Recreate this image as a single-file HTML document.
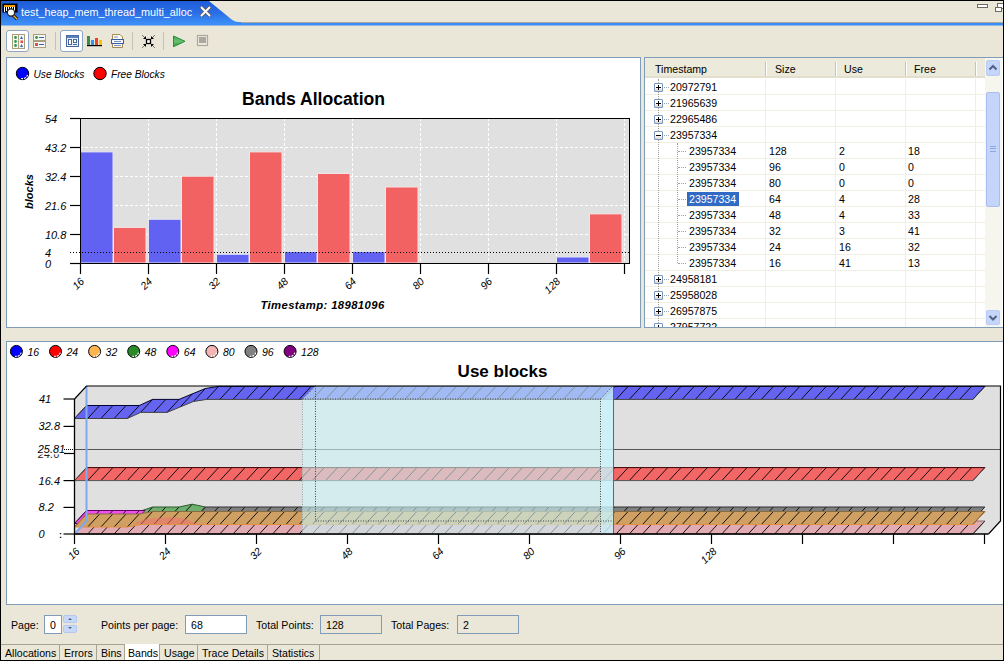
<!DOCTYPE html>
<html><head><meta charset="utf-8">
<style>
*{box-sizing:border-box}
html,body{margin:0;padding:0}
body{width:1004px;height:661px;overflow:hidden;position:relative;background:#EBE7D8;font-family:"Liberation Sans",sans-serif;font-size:10.6px;color:#000}
.a{position:absolute}
.pnl{position:absolute;background:#fff;border:1px solid #7F9DB9}
.btn{position:absolute;border:1px solid #8FA6C4;border-radius:3px;background:#fff}
.sep{position:absolute;width:1px;background:#C5C2B2}
.t{position:absolute;white-space:nowrap;line-height:1}
.box{position:absolute;border:1px solid #7F9DB9;background:#fff}
.tab{position:absolute;top:645px;height:15px;border-right:1px solid #A7A391;white-space:nowrap;padding-left:4px;line-height:17px;font-size:10.6px}
</style></head>
<body>
<!-- frame -->
<div class="a" style="left:0;top:0;width:1004px;height:1px;background:#000"></div>
<div class="a" style="left:0;top:0;width:1px;height:661px;background:#000"></div>
<div class="a" style="left:1003px;top:0;width:1px;height:661px;background:#000"></div>
<div class="a" style="left:0;top:660px;width:1004px;height:1px;background:#000"></div>

<!-- tab header -->
<svg class="a" style="left:1px;top:1px" width="1002" height="25">
  <defs><linearGradient id="tg" x1="0" y1="0" x2="0" y2="1">
    <stop offset="0" stop-color="#1F5CD8"/><stop offset="0.55" stop-color="#2A6EE6"/><stop offset="1" stop-color="#3C8EF6"/></linearGradient></defs>
  <rect x="0" y="21" width="1002" height="1" fill="#A8A89C"/>
  <path d="M0 0 H208 L230 18 C234 21 236 21 240 21 V22 H0 Z" fill="url(#tg)"/>
  <rect x="0" y="22" width="1002" height="2.5" fill="#3C8EF6"/>
</svg>
<div class="t" style="left:21px;top:7px;color:#fff;font-size:10.8px">test_heap_mem_thread_multi_alloc</div>

<!-- toolbar -->
<div class="btn" style="left:6px;top:30px;width:23px;height:22px"></div>
<div class="sep" style="left:55px;top:32px;height:18px"></div>
<div class="btn" style="left:60px;top:30px;width:23px;height:22px"></div>
<div class="sep" style="left:132px;top:32px;height:18px"></div>
<div class="sep" style="left:163px;top:32px;height:18px"></div>


<!-- tab icon + close -->
<svg class="a" style="left:1px;top:1px" width="240" height="22">
  <rect x="1.5" y="2.5" width="15" height="9" fill="#000"/>
  <g fill="#fff"><rect x="3" y="4" width="1" height="7"/><rect x="5" y="4" width="1" height="6"/><rect x="7" y="4" width="1" height="7"/><rect x="9" y="4" width="1" height="5"/><rect x="11" y="4" width="1" height="6"/><rect x="13" y="4" width="1" height="7"/></g>
  <g fill="#F5A000"><rect x="3" y="4" width="11" height="2"/></g>
  <line x1="11" y1="13" x2="16" y2="18" stroke="#000" stroke-width="3"/>
  <line x1="11" y1="13" x2="16" y2="18" stroke="#F0B030" stroke-width="1.5"/>
  <circle cx="10" cy="11.5" r="3.6" fill="#fff" stroke="#222" stroke-width="1.2"/>
  <path d="M200 6 L209 15 M209 6 L200 15" stroke="#6b5a50" stroke-width="3.2"/>
  <path d="M200 6 L209 15 M209 6 L200 15" stroke="#fff" stroke-width="1.8"/>
</svg>
<!-- min/max -->
<svg class="a" style="left:970px;top:1px" width="33" height="14">
  <rect x="7.5" y="3.5" width="10" height="3" fill="#fff" stroke="#6E6A5E"/>
  <rect x="27.5" y="2.5" width="6" height="5" fill="#fff" stroke="#6E6A5E"/>
  <rect x="25.5" y="6.5" width="6" height="4" fill="#fff" stroke="#6E6A5E"/>
</svg>
<!-- toolbar icons -->
<svg class="a" style="left:0;top:25px" width="220" height="32">
  <!-- icon1 -->
  <rect x="12.5" y="9.5" width="12" height="14" fill="#F4F6F8" stroke="#A89F7E"/>
  <line x1="18.5" y1="10" x2="18.5" y2="23" stroke="#A89F7E"/>
  <g fill="#2F9A3C"><circle cx="15.5" cy="12.5" r="1.4"/><circle cx="15.5" cy="16.5" r="1.4"/><circle cx="15.5" cy="20.5" r="1.4"/></g>
  <g fill="#3A62B8"><path d="M21.5 11 L23 14 H20Z"/><path d="M21.5 19 L23 22 H20Z"/></g>
  <rect x="20.5" y="15.5" width="2.5" height="2.5" fill="#E05040"/>
  <!-- icon2 -->
  <rect x="33.5" y="9.5" width="12" height="6" fill="#F4F6F8" stroke="#A89F7E"/>
  <rect x="33.5" y="16.5" width="12" height="6" fill="#F4F6F8" stroke="#A89F7E"/>
  <circle cx="36.5" cy="12.5" r="1.4" fill="#2F9A3C"/><rect x="35" y="18" width="3" height="3" fill="#E05040"/>
  <line x1="39" y1="12.5" x2="44" y2="12.5" stroke="#4060A0"/><line x1="39" y1="19.5" x2="44" y2="19.5" stroke="#4060A0"/>
  <!-- icon3 -->
  <rect x="66.5" y="10.5" width="12" height="11" fill="#E8F0F8" stroke="#4A68A0"/>
  <rect x="67" y="11" width="11" height="2" fill="#5A80C0"/>
  <rect x="68.5" y="14.5" width="3" height="5" fill="#fff" stroke="#4A68A0"/>
  <rect x="73.5" y="14.5" width="3" height="3" fill="#fff" stroke="#4A68A0"/>
  <line x1="73" y1="19.5" x2="77" y2="19.5" stroke="#4A68A0"/>
  <!-- icon4 chart -->
  <rect x="87" y="11" width="3" height="9" fill="#3A8A50"/>
  <rect x="91" y="15" width="3" height="5" fill="#2A98F0"/>
  <rect x="95" y="13" width="3" height="7" fill="#F04020"/>
  <rect x="99" y="15" width="3" height="5" fill="#F8C000"/>
  <rect x="87" y="20" width="15" height="1.2" fill="#000"/>
  <!-- icon5 doc -->
  <path d="M112.5 9.5 H120 L122.5 12 V22.5 H112.5Z" fill="#FCFCF4" stroke="#A08A50"/>
  <rect x="111.5" y="14.5" width="12" height="4" fill="#F4F8FF" stroke="#3A5AA0"/>
  <g stroke="#6070B0" stroke-width="0.8"><line x1="114" y1="12" x2="118" y2="12"/><line x1="114" y1="16.5" x2="121" y2="16.5"/><line x1="114" y1="20.5" x2="121" y2="20.5"/></g>
  <!-- icon6 collapse -->
  <rect x="146.5" y="14.5" width="4" height="4" fill="#fff" stroke="#000" stroke-width="1.3"/>
  <g fill="#000"><path d="M146 11 V14 H143Z"/><path d="M151 11 V14 H154Z"/><path d="M146 22 V19 H143Z"/><path d="M151 22 V19 H154Z"/></g>
  <g stroke="#000" stroke-width="1" stroke-dasharray="1,0.6"><line x1="142.5" y1="10.5" x2="145" y2="13"/><line x1="154.5" y1="10.5" x2="152" y2="13"/><line x1="142.5" y1="22.5" x2="145" y2="20"/><line x1="154.5" y1="22.5" x2="152" y2="20"/></g>
  <!-- play -->
  <defs><linearGradient id="pg" x1="0" y1="0" x2="0" y2="1"><stop offset="0" stop-color="#3AA84A"/><stop offset="0.5" stop-color="#6CC070"/><stop offset="1" stop-color="#2E9A40"/></linearGradient></defs>
  <path d="M173.5 11 L185 16.3 L173.5 21.7Z" fill="url(#pg)" stroke="#249038" stroke-width="1"/>
  <!-- stop -->
  <rect x="197.5" y="10.5" width="10" height="10" fill="#EDEBE0" stroke="#ABA69E" stroke-width="1.2"/>
  <rect x="199" y="12" width="7" height="6" fill="#ABA69E"/>
</svg>

<!-- panels -->
<div class="pnl" style="left:6px;top:57px;width:635px;height:271px"></div>
<div class="pnl" style="left:644px;top:57px;width:359px;height:271px;border-right:none"></div>
<div class="pnl" style="left:6px;top:341px;width:997px;height:264px;border-right:none"></div>

<!-- chart1 -->
<svg class="a" style="left:0;top:0" width="1004" height="661" font-family="Liberation Sans">
<circle cx="22.5" cy="73.5" r="6.2" fill="#0000FF" stroke="#000" stroke-width="1"/>
<text x="33.5" y="78" font-style="italic" font-size="10.2">Use Blocks</text>
<path d="M27.5 74.8 A5.2 5.2 0 0 1 21.2 78.5" stroke="#fff" stroke-width="1.1" fill="none" stroke-dasharray="2,1"/>
<path d="M105.0 74.8 A5.2 5.2 0 0 1 98.7 78.5" stroke="#fff" stroke-width="1.1" fill="none" stroke-dasharray="2,1"/>
<circle cx="100" cy="73.5" r="6.2" fill="#FF0000" stroke="#000" stroke-width="1"/>
<text x="111" y="78" font-style="italic" font-size="10.2">Free Blocks</text>
<text x="313.5" y="105" font-weight="bold" font-size="17.6" text-anchor="middle">Bands Allocation</text>
<rect x="80" y="118" width="549" height="145" fill="#E0E0E0"/>
<line x1="80" y1="147.5" x2="629" y2="147.5" stroke="#fff" stroke-width="1" stroke-dasharray="3,2"/>
<line x1="80" y1="176.5" x2="629" y2="176.5" stroke="#fff" stroke-width="1" stroke-dasharray="3,2"/>
<line x1="80" y1="205.5" x2="629" y2="205.5" stroke="#fff" stroke-width="1" stroke-dasharray="3,2"/>
<line x1="80" y1="234.5" x2="629" y2="234.5" stroke="#fff" stroke-width="1" stroke-dasharray="3,2"/>
<line x1="148.5" y1="118" x2="148.5" y2="263" stroke="#fff" stroke-width="1" stroke-dasharray="3,2"/>
<line x1="216.5" y1="118" x2="216.5" y2="263" stroke="#fff" stroke-width="1" stroke-dasharray="3,2"/>
<line x1="284.5" y1="118" x2="284.5" y2="263" stroke="#fff" stroke-width="1" stroke-dasharray="3,2"/>
<line x1="352.5" y1="118" x2="352.5" y2="263" stroke="#fff" stroke-width="1" stroke-dasharray="3,2"/>
<line x1="420.5" y1="118" x2="420.5" y2="263" stroke="#fff" stroke-width="1" stroke-dasharray="3,2"/>
<line x1="488.5" y1="118" x2="488.5" y2="263" stroke="#fff" stroke-width="1" stroke-dasharray="3,2"/>
<line x1="556.5" y1="118" x2="556.5" y2="263" stroke="#fff" stroke-width="1" stroke-dasharray="3,2"/>
<line x1="624.5" y1="118" x2="624.5" y2="263" stroke="#fff" stroke-width="1" stroke-dasharray="3,2"/>
<rect x="80.5" y="151.9" width="32.5" height="111.1" fill="#6262F2" stroke="#E4E4F4" stroke-width="1"/>
<rect x="113.5" y="227.4" width="32.5" height="35.6" fill="#F26262" stroke="#F4E4E4" stroke-width="1"/>
<rect x="148.5" y="219.3" width="32.5" height="43.7" fill="#6262F2" stroke="#E4E4F4" stroke-width="1"/>
<rect x="181.5" y="176.2" width="32.5" height="86.8" fill="#F26262" stroke="#F4E4E4" stroke-width="1"/>
<rect x="216.5" y="254.3" width="32.5" height="8.7" fill="#6262F2" stroke="#E4E4F4" stroke-width="1"/>
<rect x="249.5" y="151.9" width="32.5" height="111.1" fill="#F26262" stroke="#F4E4E4" stroke-width="1"/>
<rect x="284.5" y="251.6" width="32.5" height="11.4" fill="#6262F2" stroke="#E4E4F4" stroke-width="1"/>
<rect x="317.5" y="173.5" width="32.5" height="89.5" fill="#F26262" stroke="#F4E4E4" stroke-width="1"/>
<rect x="352.5" y="251.6" width="32.5" height="11.4" fill="#6262F2" stroke="#E4E4F4" stroke-width="1"/>
<rect x="385.5" y="187.0" width="32.5" height="76.0" fill="#F26262" stroke="#F4E4E4" stroke-width="1"/>
<rect x="556.5" y="257.0" width="32.5" height="6.0" fill="#6262F2" stroke="#E4E4F4" stroke-width="1"/>
<rect x="589.5" y="213.9" width="32.5" height="49.1" fill="#F26262" stroke="#F4E4E4" stroke-width="1"/>
<line x1="70" y1="252.5" x2="629" y2="252.5" stroke="#000" stroke-width="1" stroke-dasharray="1,2"/>
<rect x="80.5" y="118.5" width="549" height="145" fill="none" stroke="#000" stroke-width="1"/>
<line x1="70" y1="118.5" x2="80" y2="118.5" stroke="#000" stroke-width="1.2"/>
<text x="45" y="122.5" font-style="italic" font-size="11">54</text>
<line x1="70" y1="147.5" x2="80" y2="147.5" stroke="#000" stroke-width="1.2"/>
<text x="45" y="151.5" font-style="italic" font-size="11">43.2</text>
<line x1="70" y1="176.5" x2="80" y2="176.5" stroke="#000" stroke-width="1.2"/>
<text x="45" y="180.5" font-style="italic" font-size="11">32.4</text>
<line x1="70" y1="205.5" x2="80" y2="205.5" stroke="#000" stroke-width="1.2"/>
<text x="45" y="209.5" font-style="italic" font-size="11">21.6</text>
<line x1="70" y1="234.5" x2="80" y2="234.5" stroke="#000" stroke-width="1.2"/>
<text x="45" y="238.5" font-style="italic" font-size="11">10.8</text>
<line x1="70" y1="263.5" x2="80" y2="263.5" stroke="#000" stroke-width="1.2"/>
<text x="45" y="267.5" font-style="italic" font-size="11">0</text>
<text x="45" y="256.5" font-style="italic" font-size="11">4</text>
<line x1="80.5" y1="263" x2="80.5" y2="274" stroke="#000" stroke-width="1.2"/>
<text transform="translate(85,282) rotate(-45)" text-anchor="end" font-style="italic" font-size="10.5">16</text>
<line x1="148.5" y1="263" x2="148.5" y2="274" stroke="#000" stroke-width="1.2"/>
<text transform="translate(153,282) rotate(-45)" text-anchor="end" font-style="italic" font-size="10.5">24</text>
<line x1="216.5" y1="263" x2="216.5" y2="274" stroke="#000" stroke-width="1.2"/>
<text transform="translate(221,282) rotate(-45)" text-anchor="end" font-style="italic" font-size="10.5">32</text>
<line x1="284.5" y1="263" x2="284.5" y2="274" stroke="#000" stroke-width="1.2"/>
<text transform="translate(289,282) rotate(-45)" text-anchor="end" font-style="italic" font-size="10.5">48</text>
<line x1="352.5" y1="263" x2="352.5" y2="274" stroke="#000" stroke-width="1.2"/>
<text transform="translate(357,282) rotate(-45)" text-anchor="end" font-style="italic" font-size="10.5">64</text>
<line x1="420.5" y1="263" x2="420.5" y2="274" stroke="#000" stroke-width="1.2"/>
<text transform="translate(425,282) rotate(-45)" text-anchor="end" font-style="italic" font-size="10.5">80</text>
<line x1="488.5" y1="263" x2="488.5" y2="274" stroke="#000" stroke-width="1.2"/>
<text transform="translate(493,282) rotate(-45)" text-anchor="end" font-style="italic" font-size="10.5">96</text>
<line x1="556.5" y1="263" x2="556.5" y2="274" stroke="#000" stroke-width="1.2"/>
<text transform="translate(561,282) rotate(-45)" text-anchor="end" font-style="italic" font-size="10.5">128</text>
<line x1="624.5" y1="263" x2="624.5" y2="274" stroke="#000" stroke-width="1.2"/>
<text x="322.5" y="308.5" font-weight="bold" font-style="italic" font-size="11.3" letter-spacing="0.4" text-anchor="middle">Timestamp: 18981096</text>
<text transform="translate(33,191.5) rotate(-90)" font-weight="bold" font-style="italic" font-size="11" text-anchor="middle">blocks</text>
</svg>
<!-- table -->
<div class="a" style="left:645px;top:58px;width:357px;height:269px;overflow:hidden">
<div class="a" style="left:0;top:0;width:340px;height:20px;background:#EBEADB;border-bottom:1px solid #D6D2C2"></div>
<div class="a" style="left:0;top:18px;width:340px;height:2px;background:#E2DFCF"></div>
<div class="a" style="left:120px;top:4px;width:1px;height:14px;background:#C7C5B2"></div>
<div class="a" style="left:121px;top:4px;width:1px;height:14px;background:#fff"></div>
<div class="a" style="left:190px;top:4px;width:1px;height:14px;background:#C7C5B2"></div>
<div class="a" style="left:191px;top:4px;width:1px;height:14px;background:#fff"></div>
<div class="a" style="left:260px;top:4px;width:1px;height:14px;background:#C7C5B2"></div>
<div class="a" style="left:261px;top:4px;width:1px;height:14px;background:#fff"></div>
<div class="a" style="left:330px;top:4px;width:1px;height:14px;background:#C7C5B2"></div>
<div class="a" style="left:331px;top:4px;width:1px;height:14px;background:#fff"></div>
<div class="t" style="left:10px;top:6px">Timestamp</div>
<div class="t" style="left:130px;top:6px">Size</div>
<div class="t" style="left:199px;top:6px">Use</div>
<div class="t" style="left:269px;top:6px">Free</div>
<div class="a" style="left:0;top:36px;width:340px;height:1px;background:#F1EFE2"></div>
<div class="a" style="left:0;top:52px;width:340px;height:1px;background:#F1EFE2"></div>
<div class="a" style="left:0;top:68px;width:340px;height:1px;background:#F1EFE2"></div>
<div class="a" style="left:0;top:84px;width:340px;height:1px;background:#F1EFE2"></div>
<div class="a" style="left:0;top:100px;width:340px;height:1px;background:#F1EFE2"></div>
<div class="a" style="left:0;top:116px;width:340px;height:1px;background:#F1EFE2"></div>
<div class="a" style="left:0;top:132px;width:340px;height:1px;background:#F1EFE2"></div>
<div class="a" style="left:0;top:148px;width:340px;height:1px;background:#F1EFE2"></div>
<div class="a" style="left:0;top:164px;width:340px;height:1px;background:#F1EFE2"></div>
<div class="a" style="left:0;top:180px;width:340px;height:1px;background:#F1EFE2"></div>
<div class="a" style="left:0;top:196px;width:340px;height:1px;background:#F1EFE2"></div>
<div class="a" style="left:0;top:212px;width:340px;height:1px;background:#F1EFE2"></div>
<div class="a" style="left:0;top:228px;width:340px;height:1px;background:#F1EFE2"></div>
<div class="a" style="left:0;top:244px;width:340px;height:1px;background:#F1EFE2"></div>
<div class="a" style="left:0;top:260px;width:340px;height:1px;background:#F1EFE2"></div>
<div class="a" style="left:0;top:276px;width:340px;height:1px;background:#F1EFE2"></div>
<div class="a" style="left:120px;top:21px;width:1px;height:250px;background:#F1EFE2"></div>
<div class="a" style="left:190px;top:21px;width:1px;height:250px;background:#F1EFE2"></div>
<div class="a" style="left:260px;top:21px;width:1px;height:250px;background:#F1EFE2"></div>
<div class="a" style="left:330px;top:21px;width:1px;height:250px;background:#F1EFE2"></div>
<div class="a" style="left:13px;top:21px;width:0;height:250px;border-left:1px dotted #A0A0A0"></div>
<div class="a" style="left:32px;top:85px;width:0;height:120px;border-left:1px dotted #A0A0A0"></div>
<div class="a" style="left:19px;top:29px;width:5px;height:0;border-top:1px dotted #A0A0A0"></div>
<div class="a" style="left:9px;top:25px;width:9px;height:9px;border:1px solid #7A95C0;border-radius:1px;background:linear-gradient(#fff,#fff 50%,#D8D4C8)"></div>
<div class="a" style="left:11px;top:29px;width:5px;height:1px;background:#000"></div>
<div class="a" style="left:13px;top:27px;width:1px;height:5px;background:#000"></div>
<div class="t" style="left:25px;top:24px">20972791</div>
<div class="a" style="left:19px;top:45px;width:5px;height:0;border-top:1px dotted #A0A0A0"></div>
<div class="a" style="left:9px;top:41px;width:9px;height:9px;border:1px solid #7A95C0;border-radius:1px;background:linear-gradient(#fff,#fff 50%,#D8D4C8)"></div>
<div class="a" style="left:11px;top:45px;width:5px;height:1px;background:#000"></div>
<div class="a" style="left:13px;top:43px;width:1px;height:5px;background:#000"></div>
<div class="t" style="left:25px;top:40px">21965639</div>
<div class="a" style="left:19px;top:61px;width:5px;height:0;border-top:1px dotted #A0A0A0"></div>
<div class="a" style="left:9px;top:57px;width:9px;height:9px;border:1px solid #7A95C0;border-radius:1px;background:linear-gradient(#fff,#fff 50%,#D8D4C8)"></div>
<div class="a" style="left:11px;top:61px;width:5px;height:1px;background:#000"></div>
<div class="a" style="left:13px;top:59px;width:1px;height:5px;background:#000"></div>
<div class="t" style="left:25px;top:56px">22965486</div>
<div class="a" style="left:19px;top:77px;width:5px;height:0;border-top:1px dotted #A0A0A0"></div>
<div class="a" style="left:9px;top:73px;width:9px;height:9px;border:1px solid #7A95C0;border-radius:1px;background:linear-gradient(#fff,#fff 50%,#D8D4C8)"></div>
<div class="a" style="left:11px;top:77px;width:5px;height:1px;background:#000"></div>
<div class="t" style="left:25px;top:72px">23957334</div>
<div class="a" style="left:33px;top:93px;width:8px;height:0;border-top:1px dotted #A0A0A0"></div>
<div class="t" style="left:44px;top:88px">23957334</div>
<div class="t" style="left:124px;top:88px">128</div>
<div class="t" style="left:194px;top:88px">2</div>
<div class="t" style="left:263px;top:88px">18</div>
<div class="a" style="left:33px;top:109px;width:8px;height:0;border-top:1px dotted #A0A0A0"></div>
<div class="t" style="left:44px;top:104px">23957334</div>
<div class="t" style="left:124px;top:104px">96</div>
<div class="t" style="left:194px;top:104px">0</div>
<div class="t" style="left:263px;top:104px">0</div>
<div class="a" style="left:33px;top:125px;width:8px;height:0;border-top:1px dotted #A0A0A0"></div>
<div class="t" style="left:44px;top:120px">23957334</div>
<div class="t" style="left:124px;top:120px">80</div>
<div class="t" style="left:194px;top:120px">0</div>
<div class="t" style="left:263px;top:120px">0</div>
<div class="a" style="left:33px;top:141px;width:8px;height:0;border-top:1px dotted #A0A0A0"></div>
<div class="a" style="left:42px;top:134px;width:52px;height:14px;background:#316AC5"></div>
<div class="t" style="left:44px;top:136px;color:#fff">23957334</div>
<div class="t" style="left:124px;top:136px">64</div>
<div class="t" style="left:194px;top:136px">4</div>
<div class="t" style="left:263px;top:136px">28</div>
<div class="a" style="left:33px;top:157px;width:8px;height:0;border-top:1px dotted #A0A0A0"></div>
<div class="t" style="left:44px;top:152px">23957334</div>
<div class="t" style="left:124px;top:152px">48</div>
<div class="t" style="left:194px;top:152px">4</div>
<div class="t" style="left:263px;top:152px">33</div>
<div class="a" style="left:33px;top:173px;width:8px;height:0;border-top:1px dotted #A0A0A0"></div>
<div class="t" style="left:44px;top:168px">23957334</div>
<div class="t" style="left:124px;top:168px">32</div>
<div class="t" style="left:194px;top:168px">3</div>
<div class="t" style="left:263px;top:168px">41</div>
<div class="a" style="left:33px;top:189px;width:8px;height:0;border-top:1px dotted #A0A0A0"></div>
<div class="t" style="left:44px;top:184px">23957334</div>
<div class="t" style="left:124px;top:184px">24</div>
<div class="t" style="left:194px;top:184px">16</div>
<div class="t" style="left:263px;top:184px">32</div>
<div class="a" style="left:33px;top:205px;width:8px;height:0;border-top:1px dotted #A0A0A0"></div>
<div class="t" style="left:44px;top:200px">23957334</div>
<div class="t" style="left:124px;top:200px">16</div>
<div class="t" style="left:194px;top:200px">41</div>
<div class="t" style="left:263px;top:200px">13</div>
<div class="a" style="left:19px;top:221px;width:5px;height:0;border-top:1px dotted #A0A0A0"></div>
<div class="a" style="left:9px;top:217px;width:9px;height:9px;border:1px solid #7A95C0;border-radius:1px;background:linear-gradient(#fff,#fff 50%,#D8D4C8)"></div>
<div class="a" style="left:11px;top:221px;width:5px;height:1px;background:#000"></div>
<div class="a" style="left:13px;top:219px;width:1px;height:5px;background:#000"></div>
<div class="t" style="left:25px;top:216px">24958181</div>
<div class="a" style="left:19px;top:237px;width:5px;height:0;border-top:1px dotted #A0A0A0"></div>
<div class="a" style="left:9px;top:233px;width:9px;height:9px;border:1px solid #7A95C0;border-radius:1px;background:linear-gradient(#fff,#fff 50%,#D8D4C8)"></div>
<div class="a" style="left:11px;top:237px;width:5px;height:1px;background:#000"></div>
<div class="a" style="left:13px;top:235px;width:1px;height:5px;background:#000"></div>
<div class="t" style="left:25px;top:232px">25958028</div>
<div class="a" style="left:19px;top:253px;width:5px;height:0;border-top:1px dotted #A0A0A0"></div>
<div class="a" style="left:9px;top:249px;width:9px;height:9px;border:1px solid #7A95C0;border-radius:1px;background:linear-gradient(#fff,#fff 50%,#D8D4C8)"></div>
<div class="a" style="left:11px;top:253px;width:5px;height:1px;background:#000"></div>
<div class="a" style="left:13px;top:251px;width:1px;height:5px;background:#000"></div>
<div class="t" style="left:25px;top:248px">26957875</div>
<div class="a" style="left:19px;top:269px;width:5px;height:0;border-top:1px dotted #A0A0A0"></div>
<div class="a" style="left:9px;top:265px;width:9px;height:9px;border:1px solid #7A95C0;border-radius:1px;background:linear-gradient(#fff,#fff 50%,#D8D4C8)"></div>
<div class="a" style="left:11px;top:269px;width:5px;height:1px;background:#000"></div>
<div class="a" style="left:13px;top:267px;width:1px;height:5px;background:#000"></div>
<div class="t" style="left:25px;top:264px">27957722</div>
<div class="a" style="left:340px;top:0;width:17px;height:269px;background:#F6F5EE"></div>
<div class="a" style="left:341px;top:2px;width:14px;height:16px;border:1px solid #B8CCF5;border-radius:2px;background:#C6D6FB"></div>
<svg class="a" style="left:341px;top:2px" width="14" height="16"><path d="M3.5 9.5 L7 6 L10.5 9.5" stroke="#4D6185" stroke-width="2" fill="none"/></svg>
<div class="a" style="left:341px;top:34px;width:14px;height:115px;border:1px solid #A8BEF0;border-radius:2px;background:#C4D4FA"></div>
<div class="a" style="left:345px;top:88px;width:6px;height:6px;border-top:1px solid #8CA6E0;border-bottom:1px solid #8CA6E0"></div>
<div class="a" style="left:345px;top:90px;width:6px;height:2px;border-top:1px solid #8CA6E0"></div>
<div class="a" style="left:341px;top:252px;width:14px;height:15px;border:1px solid #B8CCF5;border-radius:2px;background:#C6D6FB"></div>
<svg class="a" style="left:341px;top:252px" width="14" height="15"><path d="M3.5 6 L7 9.5 L10.5 6" stroke="#4D6185" stroke-width="2" fill="none"/></svg>
</div>
<!-- chart2 -->
<svg class="a" style="left:0;top:0" width="1004" height="661" font-family="Liberation Sans">
<circle cx="16.4" cy="351.4" r="6" fill="#0000FF" stroke="#000" stroke-width="1"/>
<text x="27.4" y="355.5" font-style="italic" font-size="10.5">16</text>
<path d="M21.2 352.7 A5 5 0 0 1 15.1 356.2" stroke="#fff" stroke-width="1.1" fill="none" stroke-dasharray="2,1"/>
<circle cx="55.5" cy="351.4" r="6" fill="#FF0000" stroke="#000" stroke-width="1"/>
<text x="66.5" y="355.5" font-style="italic" font-size="10.5">24</text>
<path d="M60.3 352.7 A5 5 0 0 1 54.2 356.2" stroke="#fff" stroke-width="1.1" fill="none" stroke-dasharray="2,1"/>
<circle cx="94.6" cy="351.4" r="6" fill="#FFB450" stroke="#000" stroke-width="1"/>
<text x="105.6" y="355.5" font-style="italic" font-size="10.5">32</text>
<path d="M99.4 352.7 A5 5 0 0 1 93.3 356.2" stroke="#fff" stroke-width="1.1" fill="none" stroke-dasharray="2,1"/>
<circle cx="133.7" cy="351.4" r="6" fill="#2A8A2A" stroke="#000" stroke-width="1"/>
<text x="144.7" y="355.5" font-style="italic" font-size="10.5">48</text>
<path d="M138.5 352.7 A5 5 0 0 1 132.4 356.2" stroke="#fff" stroke-width="1.1" fill="none" stroke-dasharray="2,1"/>
<circle cx="172.8" cy="351.4" r="6" fill="#FF00FF" stroke="#000" stroke-width="1"/>
<text x="183.8" y="355.5" font-style="italic" font-size="10.5">64</text>
<path d="M177.6 352.7 A5 5 0 0 1 171.5 356.2" stroke="#fff" stroke-width="1.1" fill="none" stroke-dasharray="2,1"/>
<circle cx="211.9" cy="351.4" r="6" fill="#F4B4B4" stroke="#000" stroke-width="1"/>
<text x="222.9" y="355.5" font-style="italic" font-size="10.5">80</text>
<path d="M216.7 352.7 A5 5 0 0 1 210.6 356.2" stroke="#fff" stroke-width="1.1" fill="none" stroke-dasharray="2,1"/>
<circle cx="251.0" cy="351.4" r="6" fill="#808080" stroke="#000" stroke-width="1"/>
<text x="262.0" y="355.5" font-style="italic" font-size="10.5">96</text>
<path d="M255.8 352.7 A5 5 0 0 1 249.7 356.2" stroke="#fff" stroke-width="1.1" fill="none" stroke-dasharray="2,1"/>
<circle cx="290.1" cy="351.4" r="6" fill="#800080" stroke="#000" stroke-width="1"/>
<text x="301.1" y="355.5" font-style="italic" font-size="10.5">128</text>
<path d="M294.9 352.7 A5 5 0 0 1 288.8 356.2" stroke="#fff" stroke-width="1.1" fill="none" stroke-dasharray="2,1"/>
<text x="502.5" y="377" font-weight="bold" font-size="17" text-anchor="middle">Use blocks</text>
<path d="M74.5 399 L86.5 386 H1000.5 V521 L988.5 534 H74.5Z" fill="#E0E0E0"/>
<line x1="74.5" y1="449.5" x2="1000.5" y2="449.5" stroke="#555" stroke-width="1"/>
<path d="M74.5 534.0 L973.0 534.0 L985.0 521.0 L86.5 521.0Z" fill="#E2AAB2" fill-opacity="1.0"/>
<path d="M74.5 534.0 l12 -13M87.7 534.0 l12 -13M100.9 534.0 l12 -13M114.1 534.0 l12 -13M127.3 534.0 l12 -13M140.6 534.0 l12 -13M153.8 534.0 l12 -13M167.0 534.0 l12 -13M180.2 534.0 l12 -13M193.4 534.0 l12 -13M206.6 534.0 l12 -13M219.8 534.0 l12 -13M233.0 534.0 l12 -13M246.2 534.0 l12 -13M259.4 534.0 l12 -13M272.6 534.0 l12 -13M285.9 534.0 l12 -13M299.1 534.0 l12 -13M312.3 534.0 l12 -13M325.5 534.0 l12 -13M338.7 534.0 l12 -13M351.9 534.0 l12 -13M365.1 534.0 l12 -13M378.3 534.0 l12 -13M391.5 534.0 l12 -13M404.8 534.0 l12 -13M418.0 534.0 l12 -13M431.2 534.0 l12 -13M444.4 534.0 l12 -13M457.6 534.0 l12 -13M470.8 534.0 l12 -13M484.0 534.0 l12 -13M497.2 534.0 l12 -13M510.4 534.0 l12 -13M523.6 534.0 l12 -13M536.9 534.0 l12 -13M550.1 534.0 l12 -13M563.3 534.0 l12 -13M576.5 534.0 l12 -13M589.7 534.0 l12 -13M602.9 534.0 l12 -13M616.1 534.0 l12 -13M629.3 534.0 l12 -13M642.5 534.0 l12 -13M655.7 534.0 l12 -13M669.0 534.0 l12 -13M682.2 534.0 l12 -13M695.4 534.0 l12 -13M708.6 534.0 l12 -13M721.8 534.0 l12 -13M735.0 534.0 l12 -13M748.2 534.0 l12 -13M761.4 534.0 l12 -13M774.6 534.0 l12 -13M787.8 534.0 l12 -13M801.1 534.0 l12 -13M814.3 534.0 l12 -13M827.5 534.0 l12 -13M840.7 534.0 l12 -13M853.9 534.0 l12 -13M867.1 534.0 l12 -13M880.3 534.0 l12 -13M893.5 534.0 l12 -13M906.7 534.0 l12 -13M919.9 534.0 l12 -13M933.2 534.0 l12 -13M946.4 534.0 l12 -13M959.6 534.0 l12 -13M972.8 534.0 l12 -13" stroke="#000" stroke-width="0.9" stroke-opacity="1.0" fill="none"/>
<path d="M86.5 521.0 L985.0 521.0" stroke="#8a6a70" stroke-width="1" fill="none"/>
<path d="M74.5 534.0 L973.0 534.0" stroke="#333" stroke-width="1" fill="none"/>
<path d="M74.5 534.0 l12 -13 M973.0 534.0 l12 -13" stroke="#333" stroke-width="0.8" fill="none"/>
<path d="M193.4 520.0 L973.0 520.0 L985.0 507.0 L205.4 507.0Z" fill="#808080" fill-opacity="1.0"/>
<path d="M193.4 520.0 l12 -13M206.6 520.0 l12 -13M219.8 520.0 l12 -13M233.0 520.0 l12 -13M246.2 520.0 l12 -13M259.4 520.0 l12 -13M272.6 520.0 l12 -13M285.9 520.0 l12 -13M299.1 520.0 l12 -13M312.3 520.0 l12 -13M325.5 520.0 l12 -13M338.7 520.0 l12 -13M351.9 520.0 l12 -13M365.1 520.0 l12 -13M378.3 520.0 l12 -13M391.5 520.0 l12 -13M404.8 520.0 l12 -13M418.0 520.0 l12 -13M431.2 520.0 l12 -13M444.4 520.0 l12 -13M457.6 520.0 l12 -13M470.8 520.0 l12 -13M484.0 520.0 l12 -13M497.2 520.0 l12 -13M510.4 520.0 l12 -13M523.6 520.0 l12 -13M536.9 520.0 l12 -13M550.1 520.0 l12 -13M563.3 520.0 l12 -13M576.5 520.0 l12 -13M589.7 520.0 l12 -13M602.9 520.0 l12 -13M616.1 520.0 l12 -13M629.3 520.0 l12 -13M642.5 520.0 l12 -13M655.7 520.0 l12 -13M669.0 520.0 l12 -13M682.2 520.0 l12 -13M695.4 520.0 l12 -13M708.6 520.0 l12 -13M721.8 520.0 l12 -13M735.0 520.0 l12 -13M748.2 520.0 l12 -13M761.4 520.0 l12 -13M774.6 520.0 l12 -13M787.8 520.0 l12 -13M801.1 520.0 l12 -13M814.3 520.0 l12 -13M827.5 520.0 l12 -13M840.7 520.0 l12 -13M853.9 520.0 l12 -13M867.1 520.0 l12 -13M880.3 520.0 l12 -13M893.5 520.0 l12 -13M906.7 520.0 l12 -13M919.9 520.0 l12 -13M933.2 520.0 l12 -13M946.4 520.0 l12 -13M959.6 520.0 l12 -13M972.8 520.0 l12 -13" stroke="#000" stroke-width="0.9" stroke-opacity="1.0" fill="none"/>
<path d="M205.4 507.0 L985.0 507.0" stroke="#333" stroke-width="1" fill="none"/>
<path d="M193.4 520.0 L973.0 520.0" stroke="#444" stroke-width="1" fill="none"/>
<path d="M193.4 520.0 l12 -13 M973.0 520.0 l12 -13" stroke="#444" stroke-width="0.8" fill="none"/>
<path d="M127.3 524.5 L140.6 520.0 L167.0 520.0 L180.2 517.2 L193.4 520.0 L205.4 507.0 L192.2 504.2 L179.0 507.0 L152.6 507.0 L139.3 511.5Z" fill="#6EAE6E" fill-opacity="1.0"/>
<path d="M127.3 524.5 l12 -13M140.6 520.0 l12 -13M153.8 520.0 l12 -13M167.0 520.0 l12 -13M180.2 517.2 l12 -13M193.4 520.0 l12 -13" stroke="#000" stroke-width="0.9" stroke-opacity="1.0" fill="none"/>
<path d="M139.3 511.5 L152.6 507.0 L179.0 507.0 L192.2 504.2 L205.4 507.0" stroke="#2a5a2a" stroke-width="1" fill="none"/>
<path d="M127.3 524.5 L140.6 520.0 L167.0 520.0 L180.2 517.2 L193.4 520.0" stroke="#444" stroke-width="1" fill="none"/>
<path d="M127.3 524.5 l12 -13 M193.4 520.0 l12 -13" stroke="#444" stroke-width="0.8" fill="none"/>
<path d="M74.5 523.5 L133.0 523.5 L145.0 510.5 L86.5 510.5Z" fill="#F050F0" fill-opacity="1.0"/>
<path d="M74.5 523.5 l12 -13M87.7 523.5 l12 -13M100.9 523.5 l12 -13M114.1 523.5 l12 -13M127.3 523.5 l12 -13" stroke="#000" stroke-width="0.9" stroke-opacity="1.0" fill="none"/>
<path d="M86.5 510.5 L145.0 510.5" stroke="#600060" stroke-width="1" fill="none"/>
<path d="M74.5 523.5 L133.0 523.5" stroke="#600060" stroke-width="1" fill="none"/>
<path d="M74.5 523.5 l12 -13 M133.0 523.5 l12 -13" stroke="#600060" stroke-width="0.8" fill="none"/>
<path d="M74.5 527.0 L127.3 527.0 L140.6 524.5 L973.0 524.5 L985.0 511.5 L152.6 511.5 L139.3 514.0 L86.5 514.0Z" fill="#CFA062" fill-opacity="1"/>
<path d="M74.5 527.0 l12 -13M87.7 527.0 l12 -13M100.9 527.0 l12 -13M114.1 527.0 l12 -13M127.3 527.0 l12 -13M140.6 524.5 l12 -13M153.8 524.5 l12 -13M167.0 524.5 l12 -13M180.2 524.5 l12 -13M193.4 524.5 l12 -13M206.6 524.5 l12 -13M219.8 524.5 l12 -13M233.0 524.5 l12 -13M246.2 524.5 l12 -13M259.4 524.5 l12 -13M272.6 524.5 l12 -13M285.9 524.5 l12 -13M299.1 524.5 l12 -13M312.3 524.5 l12 -13M325.5 524.5 l12 -13M338.7 524.5 l12 -13M351.9 524.5 l12 -13M365.1 524.5 l12 -13M378.3 524.5 l12 -13M391.5 524.5 l12 -13M404.8 524.5 l12 -13M418.0 524.5 l12 -13M431.2 524.5 l12 -13M444.4 524.5 l12 -13M457.6 524.5 l12 -13M470.8 524.5 l12 -13M484.0 524.5 l12 -13M497.2 524.5 l12 -13M510.4 524.5 l12 -13M523.6 524.5 l12 -13M536.9 524.5 l12 -13M550.1 524.5 l12 -13M563.3 524.5 l12 -13M576.5 524.5 l12 -13M589.7 524.5 l12 -13M602.9 524.5 l12 -13M616.1 524.5 l12 -13M629.3 524.5 l12 -13M642.5 524.5 l12 -13M655.7 524.5 l12 -13M669.0 524.5 l12 -13M682.2 524.5 l12 -13M695.4 524.5 l12 -13M708.6 524.5 l12 -13M721.8 524.5 l12 -13M735.0 524.5 l12 -13M748.2 524.5 l12 -13M761.4 524.5 l12 -13M774.6 524.5 l12 -13M787.8 524.5 l12 -13M801.1 524.5 l12 -13M814.3 524.5 l12 -13M827.5 524.5 l12 -13M840.7 524.5 l12 -13M853.9 524.5 l12 -13M867.1 524.5 l12 -13M880.3 524.5 l12 -13M893.5 524.5 l12 -13M906.7 524.5 l12 -13M919.9 524.5 l12 -13M933.2 524.5 l12 -13M946.4 524.5 l12 -13M959.6 524.5 l12 -13M972.8 524.5 l12 -13" stroke="#000" stroke-width="0.9" stroke-opacity="1.0" fill="none"/>
<path d="M86.5 514.0 L139.3 514.0 L152.6 511.5 L985.0 511.5" stroke="#8a6a40" stroke-width="1" fill="none"/>
<path d="M74.5 527.0 L127.3 527.0 L140.6 524.5 L973.0 524.5" stroke="#E09040" stroke-width="1" fill="none"/>
<path d="M74.5 527.0 l12 -13 M973.0 524.5 l12 -13" stroke="#E09040" stroke-width="0.8" fill="none"/>
<path d="M132 524 L146 519 L172 517 L186 519 L198 524Z" fill="#F07070" fill-opacity="0.55"/>
<path d="M74.5 480.6 L973.0 480.6 L985.0 467.6 L86.5 467.6Z" fill="#F26666" fill-opacity="1.0"/>
<path d="M74.5 480.6 l12 -13M87.7 480.6 l12 -13M100.9 480.6 l12 -13M114.1 480.6 l12 -13M127.3 480.6 l12 -13M140.6 480.6 l12 -13M153.8 480.6 l12 -13M167.0 480.6 l12 -13M180.2 480.6 l12 -13M193.4 480.6 l12 -13M206.6 480.6 l12 -13M219.8 480.6 l12 -13M233.0 480.6 l12 -13M246.2 480.6 l12 -13M259.4 480.6 l12 -13M272.6 480.6 l12 -13M285.9 480.6 l12 -13M299.1 480.6 l12 -13M312.3 480.6 l12 -13M325.5 480.6 l12 -13M338.7 480.6 l12 -13M351.9 480.6 l12 -13M365.1 480.6 l12 -13M378.3 480.6 l12 -13M391.5 480.6 l12 -13M404.8 480.6 l12 -13M418.0 480.6 l12 -13M431.2 480.6 l12 -13M444.4 480.6 l12 -13M457.6 480.6 l12 -13M470.8 480.6 l12 -13M484.0 480.6 l12 -13M497.2 480.6 l12 -13M510.4 480.6 l12 -13M523.6 480.6 l12 -13M536.9 480.6 l12 -13M550.1 480.6 l12 -13M563.3 480.6 l12 -13M576.5 480.6 l12 -13M589.7 480.6 l12 -13M602.9 480.6 l12 -13M616.1 480.6 l12 -13M629.3 480.6 l12 -13M642.5 480.6 l12 -13M655.7 480.6 l12 -13M669.0 480.6 l12 -13M682.2 480.6 l12 -13M695.4 480.6 l12 -13M708.6 480.6 l12 -13M721.8 480.6 l12 -13M735.0 480.6 l12 -13M748.2 480.6 l12 -13M761.4 480.6 l12 -13M774.6 480.6 l12 -13M787.8 480.6 l12 -13M801.1 480.6 l12 -13M814.3 480.6 l12 -13M827.5 480.6 l12 -13M840.7 480.6 l12 -13M853.9 480.6 l12 -13M867.1 480.6 l12 -13M880.3 480.6 l12 -13M893.5 480.6 l12 -13M906.7 480.6 l12 -13M919.9 480.6 l12 -13M933.2 480.6 l12 -13M946.4 480.6 l12 -13M959.6 480.6 l12 -13M972.8 480.6 l12 -13" stroke="#000" stroke-width="0.9" stroke-opacity="1.0" fill="none"/>
<path d="M86.5 467.6 L985.0 467.6" stroke="#3a0000" stroke-width="1" fill="none"/>
<path d="M74.5 480.6 L973.0 480.6" stroke="#555" stroke-width="1" fill="none"/>
<path d="M74.5 480.6 l12 -13 M973.0 480.6 l12 -13" stroke="#555" stroke-width="0.8" fill="none"/>
<path d="M74.5 418.5 L127.3 418.5 L140.6 412.4 L167.0 412.4 L193.4 401.5 L206.6 399.4 L973.0 399.4 L985.0 386.4 L218.6 386.4 L205.4 388.5 L179.0 399.4 L152.6 399.4 L139.3 405.5 L86.5 405.5Z" fill="#6464F0" fill-opacity="1.0"/>
<path d="M74.5 418.5 l12 -13M87.7 418.5 l12 -13M100.9 418.5 l12 -13M114.1 418.5 l12 -13M127.3 418.5 l12 -13M140.6 412.4 l12 -13M153.8 412.4 l12 -13M167.0 412.4 l12 -13M180.2 407.0 l12 -13M193.4 401.5 l12 -13M206.6 399.4 l12 -13M219.8 399.4 l12 -13M233.0 399.4 l12 -13M246.2 399.4 l12 -13M259.4 399.4 l12 -13M272.6 399.4 l12 -13M285.9 399.4 l12 -13M299.1 399.4 l12 -13M312.3 399.4 l12 -13M325.5 399.4 l12 -13M338.7 399.4 l12 -13M351.9 399.4 l12 -13M365.1 399.4 l12 -13M378.3 399.4 l12 -13M391.5 399.4 l12 -13M404.8 399.4 l12 -13M418.0 399.4 l12 -13M431.2 399.4 l12 -13M444.4 399.4 l12 -13M457.6 399.4 l12 -13M470.8 399.4 l12 -13M484.0 399.4 l12 -13M497.2 399.4 l12 -13M510.4 399.4 l12 -13M523.6 399.4 l12 -13M536.9 399.4 l12 -13M550.1 399.4 l12 -13M563.3 399.4 l12 -13M576.5 399.4 l12 -13M589.7 399.4 l12 -13M602.9 399.4 l12 -13M616.1 399.4 l12 -13M629.3 399.4 l12 -13M642.5 399.4 l12 -13M655.7 399.4 l12 -13M669.0 399.4 l12 -13M682.2 399.4 l12 -13M695.4 399.4 l12 -13M708.6 399.4 l12 -13M721.8 399.4 l12 -13M735.0 399.4 l12 -13M748.2 399.4 l12 -13M761.4 399.4 l12 -13M774.6 399.4 l12 -13M787.8 399.4 l12 -13M801.1 399.4 l12 -13M814.3 399.4 l12 -13M827.5 399.4 l12 -13M840.7 399.4 l12 -13M853.9 399.4 l12 -13M867.1 399.4 l12 -13M880.3 399.4 l12 -13M893.5 399.4 l12 -13M906.7 399.4 l12 -13M919.9 399.4 l12 -13M933.2 399.4 l12 -13M946.4 399.4 l12 -13M959.6 399.4 l12 -13M972.8 399.4 l12 -13" stroke="#000" stroke-width="0.9" stroke-opacity="1.0" fill="none"/>
<path d="M86.5 405.5 L139.3 405.5 L152.6 399.4 L179.0 399.4 L205.4 388.5 L218.6 386.4 L985.0 386.4" stroke="#000030" stroke-width="1" fill="none"/>
<path d="M74.5 418.5 L127.3 418.5 L140.6 412.4 L167.0 412.4 L193.4 401.5 L206.6 399.4 L973.0 399.4" stroke="#444" stroke-width="1" fill="none"/>
<path d="M74.5 418.5 l12 -13 M973.0 399.4 l12 -13" stroke="#444" stroke-width="0.8" fill="none"/>
<path d="M302 399 L315 386 H613 V534 H302Z" fill="#CCF4F7" fill-opacity="0.6"/>
<path d="M600.5 399 L613 386 V534 H600.5Z" fill="#C8F4FF" fill-opacity="0.55"/>
<g stroke="#444" stroke-width="1" stroke-dasharray="1,1.5" fill="none"><path d="M302.5 399 H600.5 V534 M315.5 386 V521 H613 M302.5 399 L315.5 386 M600.5 399 L613 386"/></g>
<line x1="613.5" y1="386" x2="613.5" y2="534" stroke="#666" stroke-width="1"/>
<line x1="302.5" y1="399" x2="302.5" y2="534" stroke="#888" stroke-width="0.8" stroke-dasharray="1,1.5"/>
<path d="M86.5 386 V521 L74.5 534" stroke="#7FA8F2" stroke-width="2" fill="none"/>
<path d="M74.5 399 L86.5 386 H1000.5 V521 L988.5 534" stroke="#000" stroke-width="1.2" fill="none"/>
<path d="M74.5 399 V534 H988.5" stroke="#000" stroke-width="1.3" fill="none"/>
<line x1="63.5" y1="399.0" x2="74.5" y2="399.0" stroke="#000" stroke-width="1.2"/>
<text x="39" y="403.0" font-style="italic" font-size="11">41</text>
<line x1="63.5" y1="426.4" x2="74.5" y2="426.4" stroke="#000" stroke-width="1.2"/>
<text x="38.6" y="430.4" font-style="italic" font-size="11">32.8</text>
<line x1="63.5" y1="480.6" x2="74.5" y2="480.6" stroke="#000" stroke-width="1.2"/>
<text x="38.6" y="484.6" font-style="italic" font-size="11">16.4</text>
<line x1="63.5" y1="507.4" x2="74.5" y2="507.4" stroke="#000" stroke-width="1.2"/>
<text x="38.6" y="511.4" font-style="italic" font-size="11">8.2</text>
<line x1="63.5" y1="534.0" x2="74.5" y2="534.0" stroke="#000" stroke-width="1.2"/>
<text x="38.6" y="538.0" font-style="italic" font-size="11">0</text>
<text x="38" y="457.5" font-style="italic" font-size="11" fill="#222">24.6</text>
<rect x="36" y="442" width="30" height="12.5" fill="#fff"/>
<line x1="64" y1="453.5" x2="74.5" y2="453.5" stroke="#000" stroke-width="1.2"/>
<text x="37.7" y="452.9" font-style="italic" font-size="11">25.81</text>
<line x1="64" y1="449.5" x2="74.5" y2="449.5" stroke="#000" stroke-width="1" stroke-dasharray="1,1"/>
<text x="59" y="538" font-size="9" font-weight="bold">:</text>
<line x1="74.5" y1="534" x2="74.5" y2="544" stroke="#000" stroke-width="1.2"/>
<text transform="translate(80.5,552) rotate(-45)" text-anchor="end" font-style="italic" font-size="10.5">16</text>
<line x1="165.5" y1="534" x2="165.5" y2="544" stroke="#000" stroke-width="1.2"/>
<text transform="translate(171.5,552) rotate(-45)" text-anchor="end" font-style="italic" font-size="10.5">24</text>
<line x1="256.5" y1="534" x2="256.5" y2="544" stroke="#000" stroke-width="1.2"/>
<text transform="translate(262.5,552) rotate(-45)" text-anchor="end" font-style="italic" font-size="10.5">32</text>
<line x1="347.5" y1="534" x2="347.5" y2="544" stroke="#000" stroke-width="1.2"/>
<text transform="translate(353.5,552) rotate(-45)" text-anchor="end" font-style="italic" font-size="10.5">48</text>
<line x1="438.5" y1="534" x2="438.5" y2="544" stroke="#000" stroke-width="1.2"/>
<text transform="translate(444.5,552) rotate(-45)" text-anchor="end" font-style="italic" font-size="10.5">64</text>
<line x1="529.5" y1="534" x2="529.5" y2="544" stroke="#000" stroke-width="1.2"/>
<text transform="translate(535.5,552) rotate(-45)" text-anchor="end" font-style="italic" font-size="10.5">80</text>
<line x1="620.5" y1="534" x2="620.5" y2="544" stroke="#000" stroke-width="1.2"/>
<text transform="translate(626.5,552) rotate(-45)" text-anchor="end" font-style="italic" font-size="10.5">96</text>
<line x1="711.5" y1="534" x2="711.5" y2="544" stroke="#000" stroke-width="1.2"/>
<text transform="translate(717.5,552) rotate(-45)" text-anchor="end" font-style="italic" font-size="10.5">128</text>
<line x1="802.5" y1="534" x2="802.5" y2="544" stroke="#000" stroke-width="1.2"/>
<line x1="893.5" y1="534" x2="893.5" y2="544" stroke="#000" stroke-width="1.2"/>
<line x1="984.5" y1="534" x2="984.5" y2="544" stroke="#000" stroke-width="1.2"/>
</svg>
<!-- /chart2 -->
<!-- bottom controls -->
<div class="t" style="left:11px;top:620px">Page:</div>
<div class="box" style="left:44px;top:615px;width:18px;height:19px"></div>
<div class="t" style="left:50px;top:620px">0</div>
<div class="t" style="left:101px;top:620px">Points per page:</div>
<div class="box" style="left:185px;top:615px;width:62px;height:19px"></div>
<div class="t" style="left:191px;top:620px">68</div>
<div class="t" style="left:256px;top:620px">Total Points:</div>
<div class="box" style="left:320px;top:615px;width:62px;height:19px;background:#EBE7D8"></div>
<div class="t" style="left:326px;top:620px">128</div>
<div class="t" style="left:391px;top:620px">Total Pages:</div>
<div class="box" style="left:457px;top:615px;width:62px;height:19px;background:#EBE7D8"></div>
<div class="t" style="left:463px;top:620px">2</div>

<div class="a" style="left:63px;top:615px;width:14px;height:8px;border:1px solid #B4C8F0;border-radius:2px;background:#C8D8F8"></div>
<div class="a" style="left:63px;top:625px;width:14px;height:8px;border:1px solid #B4C8F0;border-radius:2px;background:#C8D8F8"></div>
<svg class="a" style="left:63px;top:615px" width="14" height="18"><path d="M5 5 L7 3 L9 5Z M5 12 L7 14 L9 12Z" fill="#4D6185"/></svg>
<!-- bottom tabs -->
<div class="a" style="left:1px;top:644px;width:1002px;height:1px;background:#A7A391"></div>
<div class="tab" style="left:1px;width:59px">Allocations</div>
<div class="tab" style="left:60px;width:37px">Errors</div>
<div class="tab" style="left:97px;width:28px">Bins</div>
<div class="tab" style="left:124px;width:36px;background:#fff;top:644px;height:16px;line-height:18px;border-left:1px solid #A7A391;padding-left:3px">Bands</div>
<div class="tab" style="left:160px;width:38px">Usage</div>
<div class="tab" style="left:198px;width:70px">Trace Details</div>
<div class="tab" style="left:268px;width:52px">Statistics</div>

</body></html>
